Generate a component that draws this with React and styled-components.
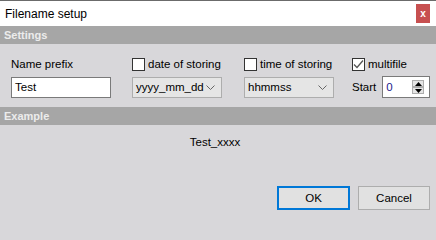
import React from 'react';
import styled, { createGlobalStyle } from 'styled-components';

const Global = createGlobalStyle`
    html, body {
        margin: 0;
        padding: 0;
        background: #d8d7da;
    }
    * {
        box-sizing: border-box;
    }
`;

const Dialog = styled.div`
    width: 436px;
    height: 217px;
    background: #d8d7da;
    border-top: 1px solid #6b6b6b;
    font-family: "Liberation Sans", Arial, sans-serif;
    font-size: 11.5px;
    color: #000;
    display: flex;
    flex-direction: column;
    overflow: hidden;
`;

const TitleBar = styled.div`
    height: 25px;
    background: #fff;
    display: flex;
    align-items: center;
    justify-content: space-between;
    padding: 0 6px 0 5px;
`;

const Title = styled.span`
    font-size: 12px;
`;

const CloseButton = styled.div`
    width: 14px;
    height: 19px;
    margin-top: 3px;
    background: #c75050;
    color: #fff;
    font-weight: bold;
    font-size: 10px;
    display: flex;
    align-items: center;
    justify-content: center;
    align-self: flex-start;
    line-height: 1;
`;

const SectionHeader = styled.div`
    height: 18px;
    background: #a6a6a6;
    color: #ececec;
    font-weight: bold;
    font-size: 11px;
    padding-left: 4px;
    display: flex;
    align-items: center;
`;

const Settings = styled.div`
    height: 63px;
    padding: 13px 0 0 11px;
    display: grid;
    grid-template-columns: 121px 112px 108px auto;
    grid-template-rows: 14px 22px;
    row-gap: 5px;
    align-items: center;
`;

const Label = styled.span`
    line-height: 14px;
`;

const CheckRow = styled.label`
    display: flex;
    align-items: center;
    gap: 3px;
    line-height: 14px;
`;

const Box = styled.span`
    width: 13px;
    height: 13px;
    background: #fff;
    border: 1px solid #333;
    display: flex;
    align-items: center;
    justify-content: center;
`;

const TextInput = styled.div`
    width: 100px;
    height: 21px;
    background: #fff;
    border: 1px solid #7a7a7a;
    padding-left: 3px;
    display: flex;
    align-items: center;
`;

const Select = styled.div`
    width: 90px;
    height: 21px;
    background: #e5e5e5;
    border: 1px solid #adadad;
    padding: 0 6px 0 3px;
    display: flex;
    align-items: center;
    justify-content: space-between;
`;

const StartRow = styled.div`
    display: flex;
    align-items: center;
    gap: 6px;
`;

const Spin = styled.div`
    width: 48px;
    height: 22px;
    background: #fff;
    border: 1px solid #7a7a7a;
    padding: 0 5px 0 3px;
    display: flex;
    align-items: center;
    justify-content: space-between;
`;

const SpinValue = styled.span`
    color: #1a1a8c;
`;

const SpinButtons = styled.div`
    display: flex;
    flex-direction: column;
`;

const SpinButton = styled.div`
    width: 12px;
    height: 7px;
    background: #e5e5e5;
    border: 1px solid #adadad;
    display: flex;
    align-items: center;
    justify-content: center;
`;

const Example = styled.div`
    flex: 1;
    display: flex;
    flex-direction: column;
    padding: 9px 6px 0 0;
`;

const ExampleText = styled.div`
    text-align: center;
    line-height: 16px;
`;

const Buttons = styled.div`
    margin-top: 36px;
    display: flex;
    justify-content: flex-end;
    gap: 8px;
`;

const Button = styled.div`
    width: ${p => p.$w}px;
    height: 24px;
    background: #e1e1e1;
    border: ${p => (p.$primary ? '2px solid #0078d7' : '1px solid #adadad')};
    display: flex;
    align-items: center;
    justify-content: center;
`;

const Chevron = () => (
    <svg width="9" height="5" viewBox="0 0 9 5">
        <path d="M0.5 0.5 L4.5 4.5 L8.5 0.5" fill="none" stroke="#666" strokeWidth="1" />
    </svg>
);

const Check = () => (
    <svg width="11" height="11" viewBox="0 0 11 11">
        <path d="M1 5.5 L4 8.5 L10 1.5" fill="none" stroke="#555" strokeWidth="1.3" />
    </svg>
);

const Arrow = ({ down }) => (
    <svg width="7" height="4" viewBox="0 0 7 4">
        <path d={down ? 'M0 0 L7 0 L3.5 4 Z' : 'M0 4 L7 4 L3.5 0 Z'} fill="#000" />
    </svg>
);

const App = () => (
    <Dialog>
        <Global />
        <TitleBar>
            <Title>Filename setup</Title>
            <CloseButton>x</CloseButton>
        </TitleBar>
        <SectionHeader>Settings</SectionHeader>
        <Settings>
            <Label>Name prefix</Label>
            <CheckRow><Box />date of storing</CheckRow>
            <CheckRow><Box />time of storing</CheckRow>
            <CheckRow><Box><Check /></Box>multifile</CheckRow>
            <TextInput>Test</TextInput>
            <Select>yyyy_mm_dd<Chevron /></Select>
            <Select>hhmmss<Chevron /></Select>
            <StartRow>
                Start
                <Spin>
                    <SpinValue>0</SpinValue>
                    <SpinButtons>
                        <SpinButton><Arrow /></SpinButton>
                        <SpinButton><Arrow down /></SpinButton>
                    </SpinButtons>
                </Spin>
            </StartRow>
        </Settings>
        <SectionHeader>Example</SectionHeader>
        <Example>
            <ExampleText>Test_xxxx</ExampleText>
            <Buttons>
                <Button $primary $w={73}>OK</Button>
                <Button $w={72}>Cancel</Button>
            </Buttons>
        </Example>
    </Dialog>
);

export default App;
